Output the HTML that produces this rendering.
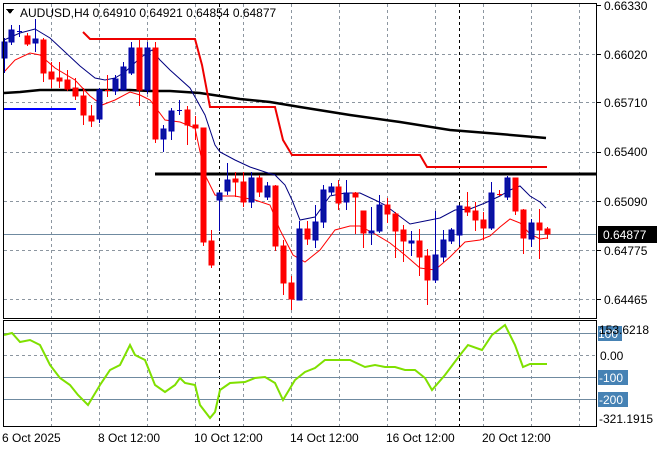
<!DOCTYPE html>
<html><head><meta charset="utf-8"><style>
html,body{margin:0;padding:0;background:#fff;width:660px;height:450px;overflow:hidden}
svg text{font-family:"Liberation Sans",sans-serif;font-size:12px;fill:#000}
</style></head><body>
<svg width="660" height="450" xmlns="http://www.w3.org/2000/svg" shape-rendering="crispEdges">
<rect width="660" height="450" fill="#fff"/>
<g stroke="#8c96a0" stroke-dasharray="3,3" stroke-width="1">
<line x1="4" x2="596" y1="54.5" y2="54.5"/><line x1="4" x2="596" y1="102.5" y2="102.5"/><line x1="4" x2="596" y1="152.5" y2="152.5"/><line x1="4" x2="596" y1="201.5" y2="201.5"/><line x1="4" x2="596" y1="250.5" y2="250.5"/><line x1="4" x2="596" y1="299.5" y2="299.5"/>
<line x1="4" x2="596" y1="355.5" y2="355.5"/>
<line x1="51.5" x2="51.5" y1="4" y2="426"/><line x1="99.5" x2="99.5" y1="4" y2="426"/><line x1="147.5" x2="147.5" y1="4" y2="426"/><line x1="195.5" x2="195.5" y1="4" y2="426"/><line x1="243.5" x2="243.5" y1="4" y2="426"/><line x1="291.5" x2="291.5" y1="4" y2="426"/><line x1="339.5" x2="339.5" y1="4" y2="426"/><line x1="387.5" x2="387.5" y1="4" y2="426"/><line x1="435.5" x2="435.5" y1="4" y2="426"/><line x1="483.5" x2="483.5" y1="4" y2="426"/><line x1="531.5" x2="531.5" y1="4" y2="426"/><line x1="579.5" x2="579.5" y1="4" y2="426"/>
</g>
<g stroke="#000" stroke-dasharray="3,3"><line x1="219.5" x2="219.5" y1="4" y2="426"/><line x1="459.5" x2="459.5" y1="4" y2="426"/></g>
<g stroke="#6f8aa0"><line x1="4" x2="596" y1="234.5" y2="234.5"/><line x1="4" x2="596" y1="333.5" y2="333.5"/><line x1="4" x2="596" y1="377.5" y2="377.5"/><line x1="4" x2="596" y1="399.5" y2="399.5"/></g>
<g shape-rendering="auto" fill="none">
<polyline stroke="#000" stroke-width="2.5" points="4,93 20,92 40,90 80,90 130,90 150,91 170,91 200,93 240,99 270,102 300,107 350,115 400,122 450,130 500,134 546,138"/>
<polyline stroke="#e00" stroke-width="2" points="83,32 90,39 195,39 202,65 210,107 275,107 283,140 292,155 420,155 427,167 547,167"/>
<line stroke="#000" stroke-width="3" x1="155" x2="596" y1="174" y2="174"/>
<line stroke="#0000ff" stroke-width="2" x1="4" x2="76" y1="109" y2="109"/>
<polyline stroke="#000080" stroke-width="1" points="4,40 20,33 35,29 50,38 65,52 80,66 95,78 105,80 115,78 125,72 140,58 152,50 160,60 170,70 190,88 205,115 215,145 220,152 235,160 250,167 265,172 275,175 285,185 292,200 300,220 315,217 330,196 345,193 360,193 375,200 385,205 398,215 410,224 425,221 440,218 455,210 470,209 485,203 500,196 510,190 520,186 530,196 540,202 546,208"/>
<polyline stroke="#f00" stroke-width="1" points="4,72 15,60 30,53 40,55 55,68 75,80 90,96 102,105 115,100 130,92 140,95 150,100 165,120 180,122 195,128 205,175 215,195 220,196 235,196 255,200 270,205 280,230 293,255 305,262 320,250 335,230 350,226 360,226 375,234 390,243 405,255 420,268 435,270 450,257 465,242 480,240 490,236 500,227 510,219 520,223 530,234 540,239 547,238"/>
<polyline stroke="#7fe000" stroke-width="2" points="4,335 12,333 20,342 30,340 40,345 50,365 60,378 70,385 78,395 88,405 100,385 110,370 120,365 130,345 135,355 145,360 155,385 165,392 175,385 180,378 185,383 195,385 200,405 210,418 215,412 220,390 230,383 245,382 255,378 265,377 275,383 283,400 295,380 305,372 315,368 325,360 340,360 350,360 365,367 375,365 385,367 395,367 405,370 415,370 425,378 432,390 445,375 460,355 468,345 482,350 492,335 505,325 515,345 523,367 530,364 547,364"/>
</g>
<g stroke-width="1">
<g stroke="#0000b0" fill="#0a14a0">
<line x1="4.5" x2="4.5" y1="38" y2="73"/><rect x="2" y="42" width="5" height="16"/>
<line x1="11.5" x2="11.5" y1="25" y2="45"/><rect x="9" y="30" width="5" height="12"/>
<line x1="19.5" x2="19.5" y1="25" y2="37"/><line x1="17" x2="22" y1="31.5" y2="31.5"/>
<line x1="35.5" x2="35.5" y1="19" y2="52"/><rect x="33" y="39" width="5" height="4"/>
<line x1="99.5" x2="99.5" y1="88" y2="123"/><rect x="97" y="90" width="5" height="29"/>
<line x1="115.5" x2="115.5" y1="75" y2="95"/><rect x="113" y="79" width="5" height="12"/>
<line x1="123.5" x2="123.5" y1="62" y2="90"/><rect x="121" y="67" width="5" height="23"/>
<line x1="131.5" x2="131.5" y1="42" y2="75"/><rect x="129" y="48" width="5" height="25"/>
<line x1="147.5" x2="147.5" y1="42" y2="94"/><rect x="145" y="48" width="5" height="42"/>
<line x1="163.5" x2="163.5" y1="125" y2="152"/><rect x="161" y="129" width="5" height="10"/>
<line x1="171.5" x2="171.5" y1="108" y2="140"/><rect x="169" y="111" width="5" height="20"/>
<line x1="179.5" x2="179.5" y1="100" y2="115"/><line x1="177" x2="182" y1="110.5" y2="110.5"/>
<line x1="219.5" x2="219.5" y1="192" y2="231"/><rect x="217" y="193" width="5" height="7"/>
<line x1="227.5" x2="227.5" y1="163" y2="195"/><rect x="225" y="180" width="5" height="11"/>
<line x1="251.5" x2="251.5" y1="172" y2="208"/><rect x="249" y="178" width="5" height="24"/>
<line x1="267.5" x2="267.5" y1="182" y2="200"/><rect x="265" y="186" width="5" height="11"/>
<line x1="299.5" x2="299.5" y1="221" y2="300"/><rect x="297" y="229" width="5" height="71"/>
<line x1="315.5" x2="315.5" y1="205" y2="248"/><rect x="313" y="222" width="5" height="18"/>
<line x1="323.5" x2="323.5" y1="185" y2="228"/><rect x="321" y="190" width="5" height="32"/>
<line x1="331.5" x2="331.5" y1="183" y2="195"/><rect x="329" y="187" width="5" height="5"/>
<line x1="346.5" x2="346.5" y1="180" y2="210"/><rect x="344" y="193" width="5" height="9"/>
<line x1="371.5" x2="371.5" y1="207" y2="245"/><rect x="369" y="231" width="5" height="2"/>
<line x1="379.5" x2="379.5" y1="195" y2="233"/><rect x="377" y="205" width="5" height="26"/>
<line x1="411.5" x2="411.5" y1="231" y2="256"/><rect x="409" y="241" width="5" height="2"/>
<line x1="435.5" x2="435.5" y1="211" y2="283"/><rect x="433" y="255" width="5" height="25"/>
<line x1="443.5" x2="443.5" y1="230" y2="262"/><rect x="441" y="240" width="5" height="17"/>
<line x1="451.5" x2="451.5" y1="228" y2="244"/><rect x="449" y="230" width="5" height="11"/>
<line x1="459.5" x2="459.5" y1="205" y2="245"/><rect x="457" y="206" width="5" height="29"/>
<line x1="491.5" x2="491.5" y1="182" y2="230"/><rect x="489" y="193" width="5" height="35"/>
<line x1="507.5" x2="507.5" y1="176" y2="200"/><rect x="505" y="178" width="5" height="19"/>
<line x1="531.5" x2="531.5" y1="219" y2="247"/><rect x="529" y="223" width="5" height="16"/>
</g>
<g stroke="#f00" fill="#f00">
<line x1="27.5" x2="27.5" y1="33" y2="46"/><rect x="25" y="36" width="5" height="8"/>
<line x1="43.5" x2="43.5" y1="38" y2="82"/><rect x="41" y="40" width="5" height="33"/>
<line x1="51.5" x2="51.5" y1="62" y2="88"/><rect x="49" y="72" width="5" height="7"/>
<line x1="59.5" x2="59.5" y1="62" y2="88"/><rect x="57" y="78" width="5" height="3"/>
<line x1="67.5" x2="67.5" y1="70" y2="91"/><rect x="65" y="80" width="5" height="9"/>
<line x1="75.5" x2="75.5" y1="78" y2="100"/><rect x="73" y="88" width="5" height="8"/>
<line x1="83.5" x2="83.5" y1="88" y2="125"/><rect x="81" y="96" width="5" height="19"/>
<line x1="91.5" x2="91.5" y1="105" y2="127"/><rect x="89" y="116" width="5" height="5"/>
<line x1="107.5" x2="107.5" y1="75" y2="97"/><line x1="105" x2="110" y1="90.5" y2="90.5"/>
<line x1="139.5" x2="139.5" y1="40" y2="106"/><rect x="137" y="48" width="5" height="42"/>
<line x1="155.5" x2="155.5" y1="42" y2="143"/><rect x="153" y="48" width="5" height="91"/>
<line x1="187.5" x2="187.5" y1="106" y2="145"/><rect x="185" y="110" width="5" height="15"/>
<line x1="195.5" x2="195.5" y1="116" y2="140"/><rect x="193" y="125" width="5" height="3"/>
<line x1="203.5" x2="203.5" y1="128" y2="246"/><rect x="201" y="128" width="5" height="114"/>
<line x1="211.5" x2="211.5" y1="230" y2="268"/><rect x="209" y="241" width="5" height="24"/>
<line x1="235.5" x2="235.5" y1="172" y2="197"/><rect x="233" y="179" width="5" height="3"/>
<line x1="243.5" x2="243.5" y1="172" y2="207"/><rect x="241" y="182" width="5" height="20"/>
<line x1="259.5" x2="259.5" y1="175" y2="197"/><rect x="257" y="178" width="5" height="14"/>
<line x1="275.5" x2="275.5" y1="185" y2="251"/><rect x="273" y="186" width="5" height="60"/>
<line x1="283.5" x2="283.5" y1="240" y2="295"/><rect x="281" y="246" width="5" height="37"/>
<line x1="291.5" x2="291.5" y1="276" y2="310"/><rect x="289" y="283" width="5" height="16"/>
<line x1="307.5" x2="307.5" y1="221" y2="245"/><rect x="305" y="229" width="5" height="10"/>
<line x1="338.5" x2="338.5" y1="180" y2="210"/><rect x="336" y="187" width="5" height="16"/>
<line x1="355.5" x2="355.5" y1="192" y2="234"/><rect x="353" y="193" width="5" height="4"/>
<line x1="363.5" x2="363.5" y1="211" y2="248"/><rect x="361" y="211" width="5" height="22"/>
<line x1="387.5" x2="387.5" y1="198" y2="223"/><rect x="385" y="205" width="5" height="9"/>
<line x1="395.5" x2="395.5" y1="212" y2="258"/><rect x="393" y="214" width="5" height="17"/>
<line x1="403.5" x2="403.5" y1="225" y2="262"/><rect x="401" y="230" width="5" height="11"/>
<line x1="419.5" x2="419.5" y1="229" y2="276"/><rect x="417" y="241" width="5" height="16"/>
<line x1="427.5" x2="427.5" y1="249" y2="305"/><rect x="425" y="256" width="5" height="24"/>
<line x1="467.5" x2="467.5" y1="192" y2="216"/><rect x="465" y="207" width="5" height="5"/>
<line x1="475.5" x2="475.5" y1="202" y2="231"/><rect x="473" y="211" width="5" height="9"/>
<line x1="483.5" x2="483.5" y1="212" y2="240"/><rect x="481" y="220" width="5" height="8"/>
<line x1="499.5" x2="499.5" y1="190" y2="196"/><line x1="497" x2="502" y1="194.5" y2="194.5"/>
<line x1="515.5" x2="515.5" y1="178" y2="215"/><rect x="513" y="178" width="5" height="33"/>
<line x1="523.5" x2="523.5" y1="209" y2="254"/><rect x="521" y="210" width="5" height="28"/>
<line x1="539.5" x2="539.5" y1="209" y2="259"/><rect x="537" y="223" width="5" height="7"/>
<line x1="547.5" x2="547.5" y1="227" y2="239"/><rect x="545" y="229" width="5" height="5"/>
</g>
</g>
<g fill="none" stroke="#000"><rect x="3.5" y="3.5" width="593" height="315"/><rect x="3.5" y="320.5" width="593" height="106"/></g>
<g stroke="#000"><line x1="597" x2="601" y1="5.5" y2="5.5"/><line x1="597" x2="601" y1="54.5" y2="54.5"/><line x1="597" x2="601" y1="102.5" y2="102.5"/><line x1="597" x2="601" y1="152.5" y2="152.5"/><line x1="597" x2="601" y1="201.5" y2="201.5"/><line x1="597" x2="601" y1="250.5" y2="250.5"/><line x1="597" x2="601" y1="299.5" y2="299.5"/></g>
<polygon points="6,9 14,9 10,14" fill="#000"/>
<text x="20" y="17">AUDUSD,H4  0.64910 0.64921 0.64854 0.64877</text>
<text x="604" y="10">0.66330</text><text x="604" y="59">0.66020</text><text x="604" y="107">0.65710</text><text x="604" y="156">0.65400</text><text x="604" y="206">0.65090</text><text x="604" y="255">0.64775</text><text x="604" y="304">0.64465</text>
<rect x="598" y="226" width="59" height="17" fill="#000"/><text x="603" y="239" style="fill:#fff">0.64877</text>
<rect x="598" y="326" width="24" height="15" fill="#4682b4"/><text x="598" y="338" style="fill:#fff">100</text>
<text x="599" y="334">153.6218</text>
<text x="600" y="360">0.00</text>
<rect x="598" y="370" width="30" height="15" fill="#4682b4"/><text x="599" y="382" style="fill:#fff">-100</text>
<rect x="598" y="392" width="30" height="15" fill="#4682b4"/><text x="599" y="404" style="fill:#fff">-200</text>
<text x="599" y="423">-321.1915</text>
<text x="2" y="442">6 Oct 2025</text><text x="98" y="442">8 Oct 12:00</text><text x="194" y="442">10 Oct 12:00</text><text x="290" y="442">14 Oct 12:00</text><text x="386" y="442">16 Oct 12:00</text><text x="482" y="442">20 Oct 12:00</text>
</svg>
</body></html>
